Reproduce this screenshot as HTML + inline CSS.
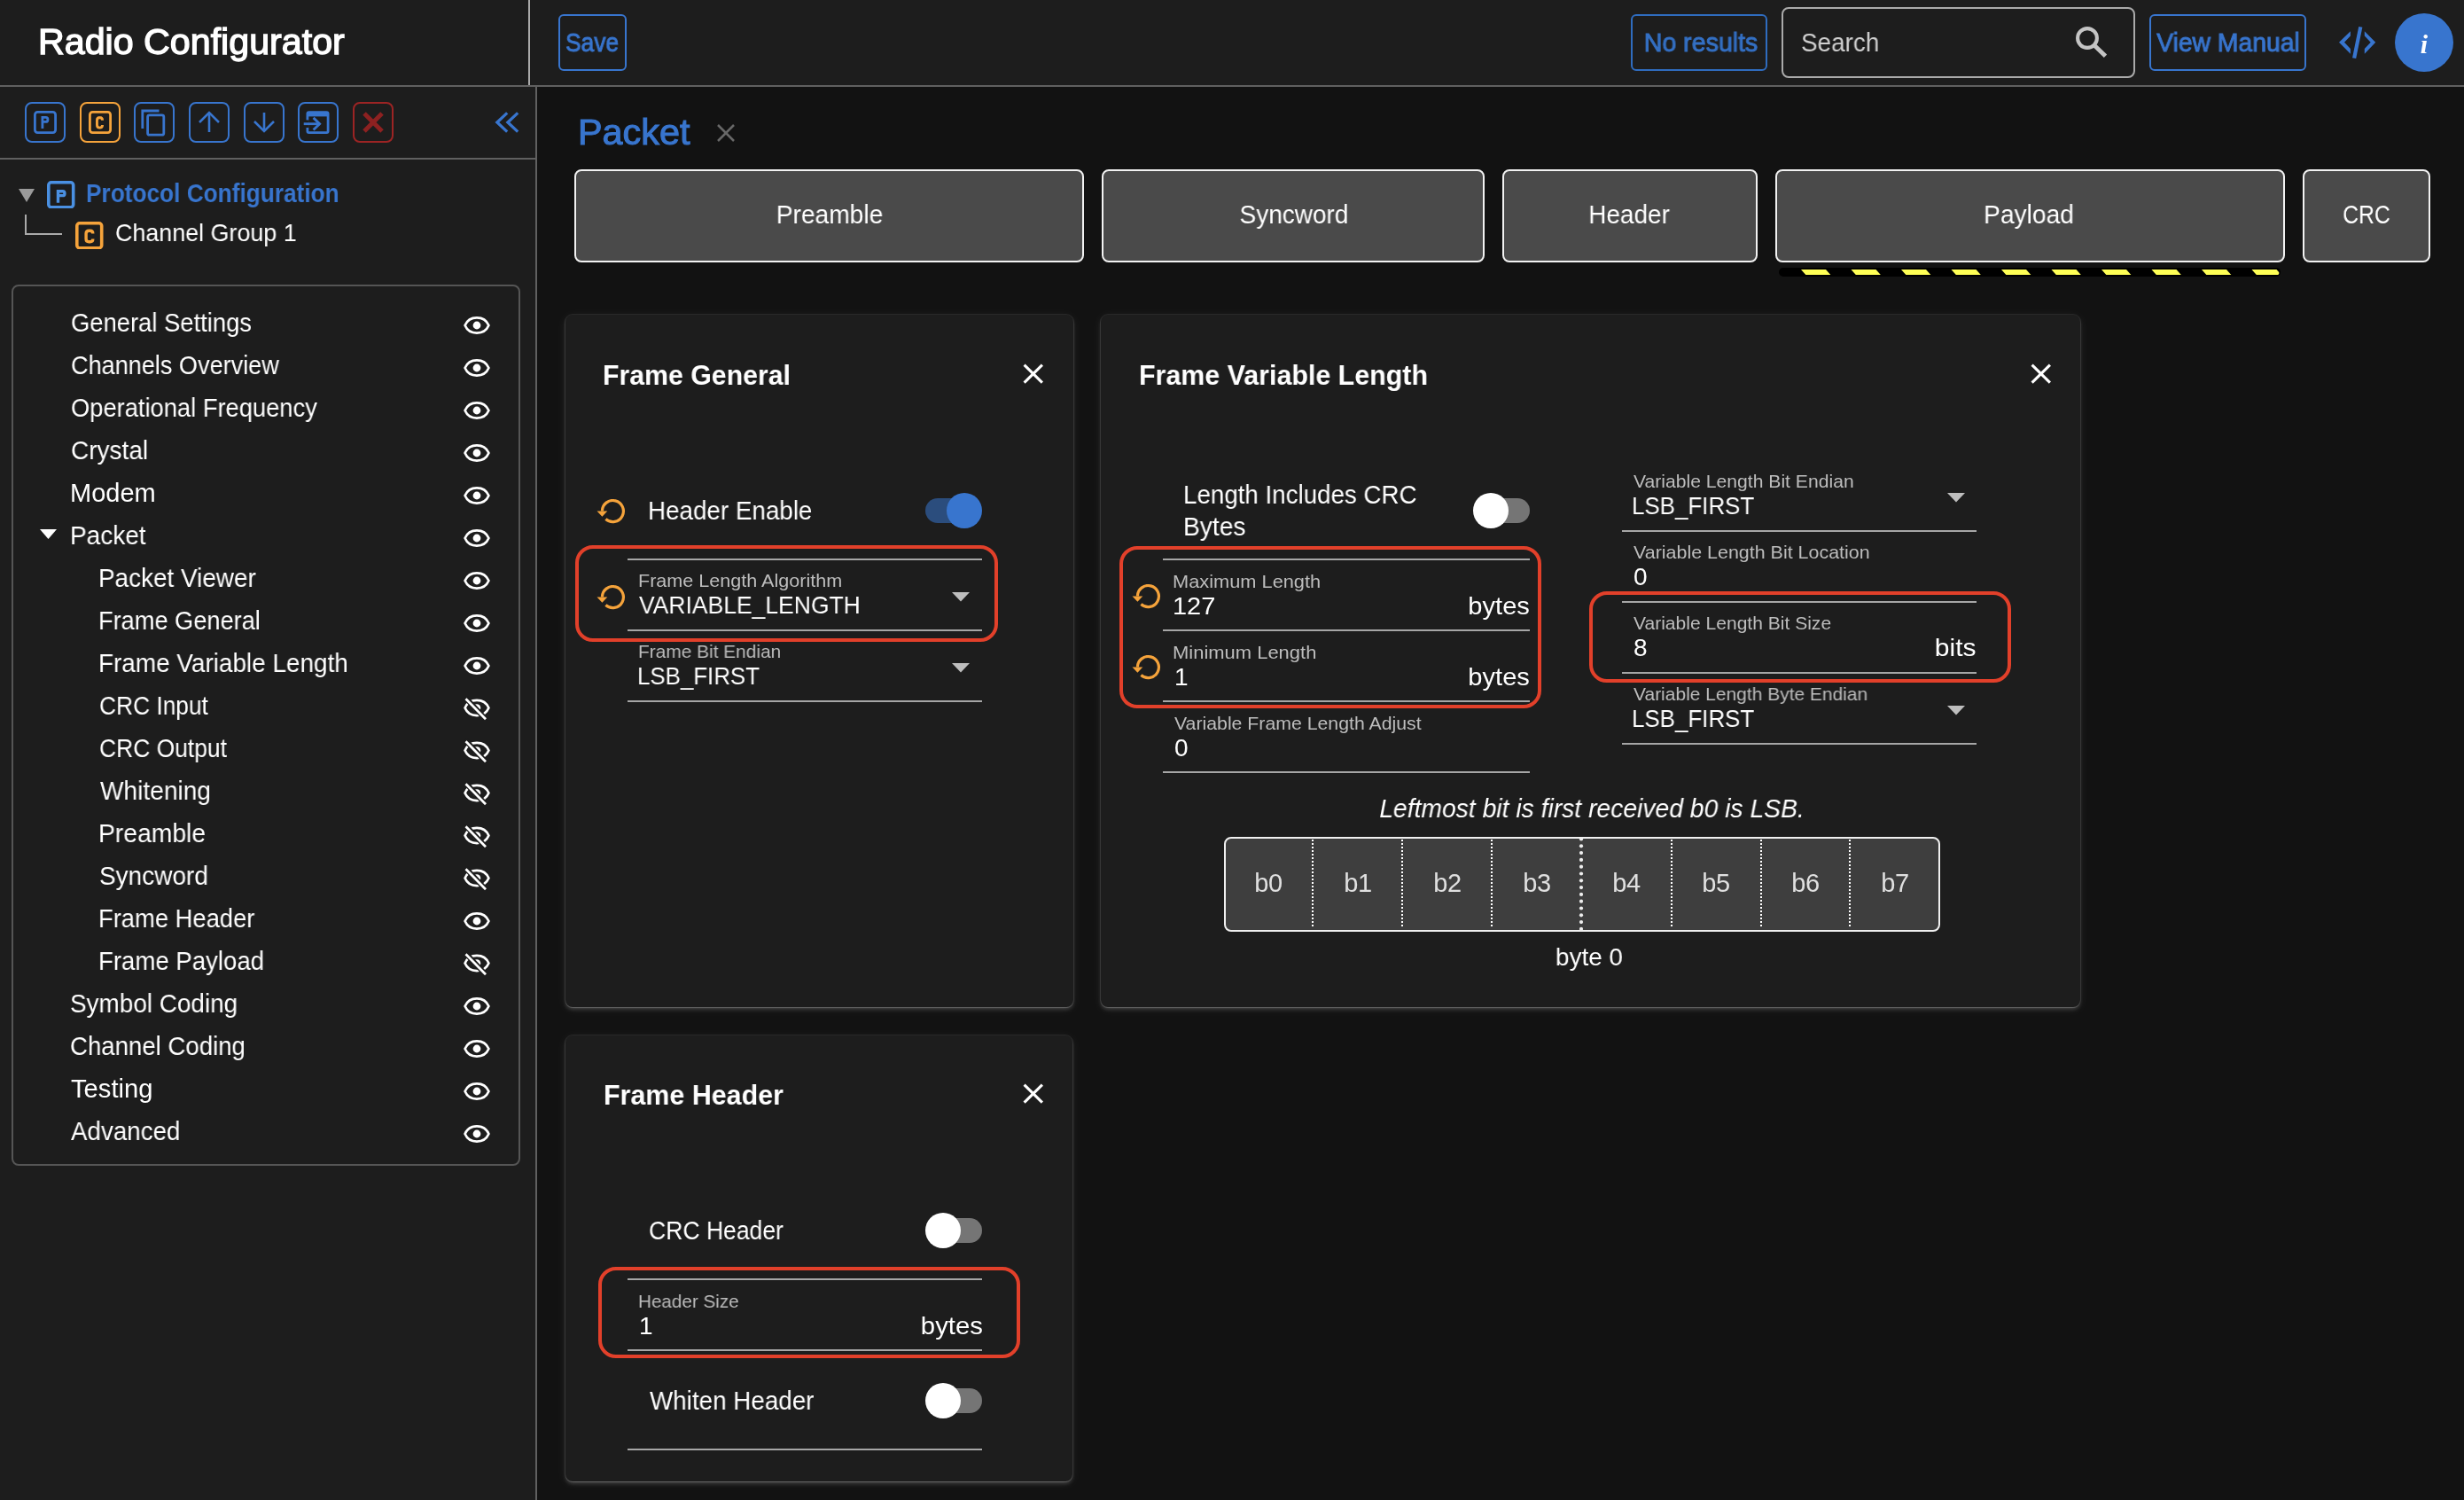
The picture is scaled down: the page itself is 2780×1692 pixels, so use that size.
<!DOCTYPE html>
<html><head><meta charset="utf-8"><style>
html,body{margin:0;padding:0;width:2780px;height:1692px;overflow:hidden;background:#121212;}
body{position:relative;font-family:"Liberation Sans",sans-serif;}
.t{position:absolute;white-space:nowrap;will-change:transform;}
.r{position:absolute;}
</style></head><body>
<div class="r" style="left:0px;top:0px;width:2780px;height:96px;background:#1d1d1d"></div>
<div class="r" style="left:0px;top:96px;width:2780px;height:2px;background:#606060"></div>
<div class="t" style="left:43.00px;top:27.1px;font-size:40px;line-height:40px;font-weight:400;color:#fff;letter-spacing:0px;font-style:normal;-webkit-text-stroke:1.3px #fff;transform:scaleX(1.0300);transform-origin:0 0">Radio Configurator</div>
<div class="r" style="left:596px;top:0px;width:2px;height:96px;background:#aaa"></div>
<div class="r" style="left:630px;top:16px;width:77px;height:64px;border:2px solid #3875ce;border-radius:6px;box-sizing:border-box"></div>
<div class="t" style="left:-332.50px;width:2000px;text-align:center;top:33.5px;font-size:29px;line-height:29px;font-weight:400;color:#3875ce;letter-spacing:0px;font-style:normal;-webkit-text-stroke:0.9px #3875ce;transform:scaleX(0.9087);transform-origin:50% 0">Save</div>
<div class="r" style="left:1840px;top:16px;width:154px;height:64px;border:2px solid #2f6cbf;border-radius:6px;box-sizing:border-box"></div>
<div class="t" style="left:919.00px;width:2000px;text-align:center;top:33.5px;font-size:29px;line-height:29px;font-weight:400;color:#3470c4;letter-spacing:0px;font-style:normal;-webkit-text-stroke:0.9px #3470c4;transform:scaleX(0.9844);transform-origin:50% 0">No results</div>
<div class="r" style="left:2010px;top:8px;width:399px;height:80px;border:2px solid #aaa;border-radius:8px;box-sizing:border-box;background:#1d1d1d"></div>
<div class="t" style="left:2031.50px;top:33.5px;font-size:29px;line-height:29px;font-weight:400;color:#cfcfcf;letter-spacing:0px;font-style:normal;;transform:scaleX(0.9611);transform-origin:0 0">Search</div>
<svg class="r" style="left:2338.4px;top:26px" width="46" height="46" viewBox="0 0 46 46"><circle cx="17" cy="17" r="10.9" fill="none" stroke="#c4c4c4" stroke-width="4.1"/><line x1="24.5" y1="24.8" x2="37.5" y2="37.2" stroke="#c4c4c4" stroke-width="4.8"/></svg>
<div class="r" style="left:2425px;top:16px;width:177px;height:64px;border:2px solid #3875ce;border-radius:6px;box-sizing:border-box"></div>
<div class="t" style="left:1513.50px;width:2000px;text-align:center;top:33.5px;font-size:29px;line-height:29px;font-weight:400;color:#3875ce;letter-spacing:0px;font-style:normal;-webkit-text-stroke:0.9px #3875ce;transform:scaleX(0.9758);transform-origin:50% 0">View Manual</div>
<svg class="r" style="left:2630px;top:25px" width="60" height="45" viewBox="0 0 60 45"><polygon points="21.9,10.2 9,22.8 21.9,35.7 21.9,30 15,22.8 21.9,15.6" fill="#3875ce"/><polygon points="37.8,10.2 50.2,22.8 37.8,35.7 37.8,30 44.7,22.8 37.8,15.6" fill="#3875ce"/><line x1="33.3" y1="5.3" x2="26.1" y2="40.6" stroke="#3875ce" stroke-width="4.2"/></svg>
<div class="r" style="left:2702px;top:15px;width:66px;height:66px;border-radius:50%;background:#3875ce"></div>
<div class="t" style="left:1735.00px;width:2000px;text-align:center;top:34.6px;font-size:30px;line-height:30px;font-weight:700;color:#fff;letter-spacing:0px;font-style:italic;font-family:'Liberation Serif',serif;transform-origin:50% 0">i</div>
<div class="r" style="left:0px;top:98px;width:604px;height:1594px;background:#1d1d1d"></div>
<div class="r" style="left:604px;top:98px;width:2px;height:1594px;background:#606060"></div>
<div class="r" style="left:0px;top:178px;width:604px;height:2px;background:#606060"></div>
<div class="r" style="left:28px;top:115px;width:46px;height:46px;border:2.2px solid #3875ce;border-radius:8px;box-sizing:border-box"></div>
<div class="r" style="left:89.7px;top:115px;width:45.999999999999986px;height:46px;border:2.2px solid #f5a33b;border-radius:8px;box-sizing:border-box"></div>
<div class="r" style="left:151.3px;top:115px;width:46.0px;height:46px;border:2.2px solid #3875ce;border-radius:8px;box-sizing:border-box"></div>
<div class="r" style="left:213px;top:115px;width:46px;height:46px;border:2.2px solid #3875ce;border-radius:8px;box-sizing:border-box"></div>
<div class="r" style="left:274.7px;top:115px;width:46.0px;height:46px;border:2.2px solid #3875ce;border-radius:8px;box-sizing:border-box"></div>
<div class="r" style="left:336.3px;top:115px;width:46.0px;height:46px;border:2.2px solid #3875ce;border-radius:8px;box-sizing:border-box"></div>
<div class="r" style="left:398px;top:115px;width:46px;height:46px;border:2.2px solid #9c2424;border-radius:8px;box-sizing:border-box"></div>
<svg class="r" style="left:38px;top:125px" width="26" height="26" viewBox="0 0 26 26"><rect x="1.4" y="1.4" width="23.2" height="23.2" rx="3" fill="none" stroke="#3875ce" stroke-width="2.8"/><path d="M9.9 20 V7.4 H13.7 Q15.9 7.4 15.9 9.600000000000001 V10.239999999999998 Q15.9 12.44 13.7 12.44 H9.9" fill="none" stroke="#3875ce" stroke-width="2.8"/></svg>
<svg class="r" style="left:99.7px;top:125px" width="26" height="26" viewBox="0 0 26 26"><rect x="1.4" y="1.4" width="23.2" height="23.2" rx="3" fill="none" stroke="#f5a33b" stroke-width="2.8"/><path d="M15.55 10.379999999999999 V10.65 Q15.55 7.45 12.350000000000001 7.45 H12.649999999999999 Q9.45 7.45 9.45 10.65 V15.950000000000003 Q9.45 19.150000000000002 12.649999999999999 19.150000000000002 H12.350000000000001 Q15.55 19.150000000000002 15.55 15.950000000000003 V16.220000000000002" fill="none" stroke="#f5a33b" stroke-width="2.9"/></svg>
<svg class="r" style="left:151.3px;top:115px" width="46" height="46" viewBox="0 0 46 46"><path d="M28.5 10 H9.8 V30" fill="none" stroke="#3875ce" stroke-width="2.8"/><rect x="15.6" y="14.8" width="18.2" height="22.4" rx="2" fill="none" stroke="#3875ce" stroke-width="2.8"/></svg>
<svg class="r" style="left:213px;top:115px" width="46" height="46" viewBox="0 0 46 46"><line x1="23" y1="12" x2="23" y2="34" stroke="#3875ce" stroke-width="2.6"/><polyline points="12,23 23,12 34,23" fill="none" stroke="#3875ce" stroke-width="2.6"/></svg>
<svg class="r" style="left:274.7px;top:115px" width="46" height="46" viewBox="0 0 46 46"><line x1="23" y1="12" x2="23" y2="33" stroke="#3875ce" stroke-width="2.6"/><polyline points="12,22 23,33 34,22" fill="none" stroke="#3875ce" stroke-width="2.6"/></svg>
<svg class="r" style="left:336.3px;top:115px" width="46" height="46" viewBox="0 0 46 46"><rect x="9.5" y="10.2" width="26" height="25.8" rx="3" fill="#3875ce"/><rect x="12.3" y="16.4" width="20.4" height="16.8" fill="#1d1d1d"/><rect x="9" y="20.4" width="3.6" height="8.6" fill="#1d1d1d"/><line x1="6.7" y1="24.7" x2="25" y2="24.7" stroke="#3875ce" stroke-width="2.8"/><polyline points="17.6,17.9 24.6,24.7 17.6,31.5" fill="none" stroke="#3875ce" stroke-width="2.9"/></svg>
<svg class="r" style="left:398px;top:115px" width="46" height="46" viewBox="0 0 46 46"><line x1="13" y1="13" x2="33" y2="33" stroke="#8d2121" stroke-width="5"/><line x1="33" y1="13" x2="13" y2="33" stroke="#8d2121" stroke-width="5"/></svg>
<svg class="r" style="left:555.6px;top:124px" width="36" height="28" viewBox="0 0 36 28"><polyline points="16.2,3.4 4.9,14 16.2,24.6" fill="none" stroke="#3875ce" stroke-width="3.3"/><polyline points="28.2,3.4 16.9,14 28.2,24.6" fill="none" stroke="#3875ce" stroke-width="3.3"/></svg>
<svg class="r" style="left:20px;top:212px" width="20" height="17" viewBox="0 0 20 17"><polygon points="1,1 19,1 10,16" fill="#9a9a9a"/></svg>
<svg class="r" style="left:53px;top:203.5px" width="31.5" height="31.5" viewBox="0 0 31.5 31.5"><rect x="1.8" y="1.8" width="27.9" height="27.9" rx="3" fill="none" stroke="#4a90e2" stroke-width="3.6"/><path d="M12.5 24.8 V11.7 H17.700000000000003 Q19.900000000000002 11.7 19.900000000000002 13.899999999999999 V14.388000000000005 Q19.900000000000002 16.588000000000005 17.700000000000003 16.588000000000005 H12.5" fill="none" stroke="#4a90e2" stroke-width="3.4"/></svg>
<div class="t" style="left:97.00px;top:203.5px;font-size:29px;line-height:29px;font-weight:700;color:#3875ce;letter-spacing:0px;font-style:normal;;transform:scaleX(0.9047);transform-origin:0 0">Protocol Configuration</div>
<div class="r" style="left:28px;top:242px;width:2px;height:23px;background:#aaa"></div>
<div class="r" style="left:28px;top:263px;width:42px;height:2px;background:#aaa"></div>
<svg class="r" style="left:85px;top:249.5px" width="31.5" height="31.5" viewBox="0 0 31.5 31.5"><rect x="1.8" y="1.8" width="27.9" height="27.9" rx="3" fill="none" stroke="#f5a33b" stroke-width="3.6"/><path d="M19.8 13.3 V13.399999999999999 Q19.8 10.2 16.6 10.2 H15.3 Q12.1 10.2 12.1 13.399999999999999 V19.6 Q12.1 22.8 15.3 22.8 H16.6 Q19.8 22.8 19.8 19.6 V19.7" fill="none" stroke="#f5a33b" stroke-width="3.4"/></svg>
<div class="t" style="left:130.00px;top:249.3px;font-size:28px;line-height:28px;font-weight:400;color:#fff;letter-spacing:0px;font-style:normal;;transform:scaleX(0.9598);transform-origin:0 0">Channel Group 1</div>
<div class="r" style="left:12.5px;top:320.5px;width:574.5px;height:994.5px;border:2px solid #555;border-radius:8px;box-sizing:border-box"></div>
<div class="t" style="left:80.00px;top:349.5px;font-size:29px;line-height:29px;font-weight:400;color:#fff;letter-spacing:0px;font-style:normal;;transform:scaleX(0.9443);transform-origin:0 0">General Settings</div>
<svg class="r" style="left:523px;top:355.5px" width="30" height="22" viewBox="0 0 30 22"><path d="M1.6 11 C6.5 -0.5 23.5 -0.5 28.4 11 C23.5 22.5 6.5 22.5 1.6 11 Z" fill="none" stroke="#fff" stroke-width="2.7"/><circle cx="15" cy="11" r="4.4" fill="#fff"/></svg>
<div class="t" style="left:80.00px;top:397.5px;font-size:29px;line-height:29px;font-weight:400;color:#fff;letter-spacing:0px;font-style:normal;;transform:scaleX(0.9338);transform-origin:0 0">Channels Overview</div>
<svg class="r" style="left:523px;top:403.5px" width="30" height="22" viewBox="0 0 30 22"><path d="M1.6 11 C6.5 -0.5 23.5 -0.5 28.4 11 C23.5 22.5 6.5 22.5 1.6 11 Z" fill="none" stroke="#fff" stroke-width="2.7"/><circle cx="15" cy="11" r="4.4" fill="#fff"/></svg>
<div class="t" style="left:80.00px;top:445.5px;font-size:29px;line-height:29px;font-weight:400;color:#fff;letter-spacing:0px;font-style:normal;;transform:scaleX(0.9419);transform-origin:0 0">Operational Frequency</div>
<svg class="r" style="left:523px;top:451.5px" width="30" height="22" viewBox="0 0 30 22"><path d="M1.6 11 C6.5 -0.5 23.5 -0.5 28.4 11 C23.5 22.5 6.5 22.5 1.6 11 Z" fill="none" stroke="#fff" stroke-width="2.7"/><circle cx="15" cy="11" r="4.4" fill="#fff"/></svg>
<div class="t" style="left:80.00px;top:493.5px;font-size:29px;line-height:29px;font-weight:400;color:#fff;letter-spacing:0px;font-style:normal;;transform:scaleX(0.9659);transform-origin:0 0">Crystal</div>
<svg class="r" style="left:523px;top:499.5px" width="30" height="22" viewBox="0 0 30 22"><path d="M1.6 11 C6.5 -0.5 23.5 -0.5 28.4 11 C23.5 22.5 6.5 22.5 1.6 11 Z" fill="none" stroke="#fff" stroke-width="2.7"/><circle cx="15" cy="11" r="4.4" fill="#fff"/></svg>
<div class="t" style="left:79.00px;top:541.5px;font-size:29px;line-height:29px;font-weight:400;color:#fff;letter-spacing:0px;font-style:normal;;transform:scaleX(1.0003);transform-origin:0 0">Modem</div>
<svg class="r" style="left:523px;top:547.5px" width="30" height="22" viewBox="0 0 30 22"><path d="M1.6 11 C6.5 -0.5 23.5 -0.5 28.4 11 C23.5 22.5 6.5 22.5 1.6 11 Z" fill="none" stroke="#fff" stroke-width="2.7"/><circle cx="15" cy="11" r="4.4" fill="#fff"/></svg>
<div class="t" style="left:79.00px;top:589.5px;font-size:29px;line-height:29px;font-weight:400;color:#fff;letter-spacing:0px;font-style:normal;;transform:scaleX(0.9659);transform-origin:0 0">Packet</div>
<svg class="r" style="left:523px;top:595.5px" width="30" height="22" viewBox="0 0 30 22"><path d="M1.6 11 C6.5 -0.5 23.5 -0.5 28.4 11 C23.5 22.5 6.5 22.5 1.6 11 Z" fill="none" stroke="#fff" stroke-width="2.7"/><circle cx="15" cy="11" r="4.4" fill="#fff"/></svg>
<div class="t" style="left:111.00px;top:637.5px;font-size:29px;line-height:29px;font-weight:400;color:#fff;letter-spacing:0px;font-style:normal;;transform:scaleX(0.9618);transform-origin:0 0">Packet Viewer</div>
<svg class="r" style="left:523px;top:643.5px" width="30" height="22" viewBox="0 0 30 22"><path d="M1.6 11 C6.5 -0.5 23.5 -0.5 28.4 11 C23.5 22.5 6.5 22.5 1.6 11 Z" fill="none" stroke="#fff" stroke-width="2.7"/><circle cx="15" cy="11" r="4.4" fill="#fff"/></svg>
<div class="t" style="left:111.00px;top:685.5px;font-size:29px;line-height:29px;font-weight:400;color:#fff;letter-spacing:0px;font-style:normal;;transform:scaleX(0.9376);transform-origin:0 0">Frame General</div>
<svg class="r" style="left:523px;top:691.5px" width="30" height="22" viewBox="0 0 30 22"><path d="M1.6 11 C6.5 -0.5 23.5 -0.5 28.4 11 C23.5 22.5 6.5 22.5 1.6 11 Z" fill="none" stroke="#fff" stroke-width="2.7"/><circle cx="15" cy="11" r="4.4" fill="#fff"/></svg>
<div class="t" style="left:111.00px;top:733.5px;font-size:29px;line-height:29px;font-weight:400;color:#fff;letter-spacing:0px;font-style:normal;;transform:scaleX(0.9621);transform-origin:0 0">Frame Variable Length</div>
<svg class="r" style="left:523px;top:739.5px" width="30" height="22" viewBox="0 0 30 22"><path d="M1.6 11 C6.5 -0.5 23.5 -0.5 28.4 11 C23.5 22.5 6.5 22.5 1.6 11 Z" fill="none" stroke="#fff" stroke-width="2.7"/><circle cx="15" cy="11" r="4.4" fill="#fff"/></svg>
<div class="t" style="left:112.00px;top:781.5px;font-size:29px;line-height:29px;font-weight:400;color:#fff;letter-spacing:0px;font-style:normal;;transform:scaleX(0.9075);transform-origin:0 0">CRC Input</div>
<svg class="r" style="left:523px;top:785.0px" width="30" height="28" viewBox="0 0 30 28"><path d="M1.6 13.5 C6.5 2 23.5 2 28.4 13.5 C23.5 25 6.5 25 1.6 13.5 Z" fill="none" stroke="#fff" stroke-width="2.7"/><circle cx="15" cy="13.5" r="4.3" fill="#fff"/><line x1="1.5" y1="1.5" x2="26.5" y2="27.8" stroke="#1d1d1d" stroke-width="6"/><line x1="2.5" y1="3.2" x2="25" y2="26.2" stroke="#fff" stroke-width="2.7"/></svg>
<div class="t" style="left:112.00px;top:829.5px;font-size:29px;line-height:29px;font-weight:400;color:#fff;letter-spacing:0px;font-style:normal;;transform:scaleX(0.9108);transform-origin:0 0">CRC Output</div>
<svg class="r" style="left:523px;top:833.0px" width="30" height="28" viewBox="0 0 30 28"><path d="M1.6 13.5 C6.5 2 23.5 2 28.4 13.5 C23.5 25 6.5 25 1.6 13.5 Z" fill="none" stroke="#fff" stroke-width="2.7"/><circle cx="15" cy="13.5" r="4.3" fill="#fff"/><line x1="1.5" y1="1.5" x2="26.5" y2="27.8" stroke="#1d1d1d" stroke-width="6"/><line x1="2.5" y1="3.2" x2="25" y2="26.2" stroke="#fff" stroke-width="2.7"/></svg>
<div class="t" style="left:113.00px;top:877.5px;font-size:29px;line-height:29px;font-weight:400;color:#fff;letter-spacing:0px;font-style:normal;;transform:scaleX(0.9689);transform-origin:0 0">Whitening</div>
<svg class="r" style="left:523px;top:881.0px" width="30" height="28" viewBox="0 0 30 28"><path d="M1.6 13.5 C6.5 2 23.5 2 28.4 13.5 C23.5 25 6.5 25 1.6 13.5 Z" fill="none" stroke="#fff" stroke-width="2.7"/><circle cx="15" cy="13.5" r="4.3" fill="#fff"/><line x1="1.5" y1="1.5" x2="26.5" y2="27.8" stroke="#1d1d1d" stroke-width="6"/><line x1="2.5" y1="3.2" x2="25" y2="26.2" stroke="#fff" stroke-width="2.7"/></svg>
<div class="t" style="left:111.00px;top:925.5px;font-size:29px;line-height:29px;font-weight:400;color:#fff;letter-spacing:0px;font-style:normal;;transform:scaleX(0.9756);transform-origin:0 0">Preamble</div>
<svg class="r" style="left:523px;top:929.0px" width="30" height="28" viewBox="0 0 30 28"><path d="M1.6 13.5 C6.5 2 23.5 2 28.4 13.5 C23.5 25 6.5 25 1.6 13.5 Z" fill="none" stroke="#fff" stroke-width="2.7"/><circle cx="15" cy="13.5" r="4.3" fill="#fff"/><line x1="1.5" y1="1.5" x2="26.5" y2="27.8" stroke="#1d1d1d" stroke-width="6"/><line x1="2.5" y1="3.2" x2="25" y2="26.2" stroke="#fff" stroke-width="2.7"/></svg>
<div class="t" style="left:112.00px;top:973.5px;font-size:29px;line-height:29px;font-weight:400;color:#fff;letter-spacing:0px;font-style:normal;;transform:scaleX(0.9646);transform-origin:0 0">Syncword</div>
<svg class="r" style="left:523px;top:977.0px" width="30" height="28" viewBox="0 0 30 28"><path d="M1.6 13.5 C6.5 2 23.5 2 28.4 13.5 C23.5 25 6.5 25 1.6 13.5 Z" fill="none" stroke="#fff" stroke-width="2.7"/><circle cx="15" cy="13.5" r="4.3" fill="#fff"/><line x1="1.5" y1="1.5" x2="26.5" y2="27.8" stroke="#1d1d1d" stroke-width="6"/><line x1="2.5" y1="3.2" x2="25" y2="26.2" stroke="#fff" stroke-width="2.7"/></svg>
<div class="t" style="left:111.00px;top:1021.5px;font-size:29px;line-height:29px;font-weight:400;color:#fff;letter-spacing:0px;font-style:normal;;transform:scaleX(0.9433);transform-origin:0 0">Frame Header</div>
<svg class="r" style="left:523px;top:1027.5px" width="30" height="22" viewBox="0 0 30 22"><path d="M1.6 11 C6.5 -0.5 23.5 -0.5 28.4 11 C23.5 22.5 6.5 22.5 1.6 11 Z" fill="none" stroke="#fff" stroke-width="2.7"/><circle cx="15" cy="11" r="4.4" fill="#fff"/></svg>
<div class="t" style="left:111.00px;top:1069.5px;font-size:29px;line-height:29px;font-weight:400;color:#fff;letter-spacing:0px;font-style:normal;;transform:scaleX(0.9511);transform-origin:0 0">Frame Payload</div>
<svg class="r" style="left:523px;top:1073.0px" width="30" height="28" viewBox="0 0 30 28"><path d="M1.6 13.5 C6.5 2 23.5 2 28.4 13.5 C23.5 25 6.5 25 1.6 13.5 Z" fill="none" stroke="#fff" stroke-width="2.7"/><circle cx="15" cy="13.5" r="4.3" fill="#fff"/><line x1="1.5" y1="1.5" x2="26.5" y2="27.8" stroke="#1d1d1d" stroke-width="6"/><line x1="2.5" y1="3.2" x2="25" y2="26.2" stroke="#fff" stroke-width="2.7"/></svg>
<div class="t" style="left:79.00px;top:1117.5px;font-size:29px;line-height:29px;font-weight:400;color:#fff;letter-spacing:0px;font-style:normal;;transform:scaleX(0.9616);transform-origin:0 0">Symbol Coding</div>
<svg class="r" style="left:523px;top:1123.5px" width="30" height="22" viewBox="0 0 30 22"><path d="M1.6 11 C6.5 -0.5 23.5 -0.5 28.4 11 C23.5 22.5 6.5 22.5 1.6 11 Z" fill="none" stroke="#fff" stroke-width="2.7"/><circle cx="15" cy="11" r="4.4" fill="#fff"/></svg>
<div class="t" style="left:79.00px;top:1165.5px;font-size:29px;line-height:29px;font-weight:400;color:#fff;letter-spacing:0px;font-style:normal;;transform:scaleX(0.9515);transform-origin:0 0">Channel Coding</div>
<svg class="r" style="left:523px;top:1171.5px" width="30" height="22" viewBox="0 0 30 22"><path d="M1.6 11 C6.5 -0.5 23.5 -0.5 28.4 11 C23.5 22.5 6.5 22.5 1.6 11 Z" fill="none" stroke="#fff" stroke-width="2.7"/><circle cx="15" cy="11" r="4.4" fill="#fff"/></svg>
<div class="t" style="left:80.00px;top:1213.5px;font-size:29px;line-height:29px;font-weight:400;color:#fff;letter-spacing:0px;font-style:normal;;transform:scaleX(1.0059);transform-origin:0 0">Testing</div>
<svg class="r" style="left:523px;top:1219.5px" width="30" height="22" viewBox="0 0 30 22"><path d="M1.6 11 C6.5 -0.5 23.5 -0.5 28.4 11 C23.5 22.5 6.5 22.5 1.6 11 Z" fill="none" stroke="#fff" stroke-width="2.7"/><circle cx="15" cy="11" r="4.4" fill="#fff"/></svg>
<div class="t" style="left:80.00px;top:1261.5px;font-size:29px;line-height:29px;font-weight:400;color:#fff;letter-spacing:0px;font-style:normal;;transform:scaleX(0.9571);transform-origin:0 0">Advanced</div>
<svg class="r" style="left:523px;top:1267.5px" width="30" height="22" viewBox="0 0 30 22"><path d="M1.6 11 C6.5 -0.5 23.5 -0.5 28.4 11 C23.5 22.5 6.5 22.5 1.6 11 Z" fill="none" stroke="#fff" stroke-width="2.7"/><circle cx="15" cy="11" r="4.4" fill="#fff"/></svg>
<svg class="r" style="left:45px;top:597px" width="20" height="12" viewBox="0 0 20 12"><polygon points="0,0 19,0 9.5,11" fill="#fff"/></svg>
<div class="t" style="left:652.00px;top:129.3px;font-size:41px;line-height:41px;font-weight:400;color:#3875ce;letter-spacing:0px;font-style:normal;-webkit-text-stroke:1.1px #3875ce;transform:scaleX(1.0083);transform-origin:0 0">Packet</div>
<svg class="r" style="left:807px;top:138px" width="24" height="24" viewBox="0 0 24 24"><line x1="3" y1="3" x2="21" y2="21" stroke="#686868" stroke-width="2.5"/><line x1="21" y1="3" x2="3" y2="21" stroke="#686868" stroke-width="2.5"/></svg>
<div class="r" style="left:648px;top:190.5px;width:574.5px;height:105.5px;background:#4a4a4a;border:2px solid #f2f2f2;border-radius:8px;box-sizing:border-box"></div>
<div class="t" style="left:-64.50px;width:2000px;text-align:center;top:227.5px;font-size:29px;line-height:29px;font-weight:400;color:#fff;letter-spacing:0px;font-style:normal;;transform:scaleX(0.9717);transform-origin:50% 0">Preamble</div>
<div class="r" style="left:1243px;top:190.5px;width:432px;height:105.5px;background:#4a4a4a;border:2px solid #f2f2f2;border-radius:8px;box-sizing:border-box"></div>
<div class="t" style="left:459.75px;width:2000px;text-align:center;top:227.5px;font-size:29px;line-height:29px;font-weight:400;color:#fff;letter-spacing:0px;font-style:normal;;transform:scaleX(0.9642);transform-origin:50% 0">Syncword</div>
<div class="r" style="left:1695px;top:190.5px;width:287.5px;height:105.5px;background:#4a4a4a;border:2px solid #f2f2f2;border-radius:8px;box-sizing:border-box"></div>
<div class="t" style="left:838.00px;width:2000px;text-align:center;top:227.5px;font-size:29px;line-height:29px;font-weight:400;color:#fff;letter-spacing:0px;font-style:normal;;transform:scaleX(0.9635);transform-origin:50% 0">Header</div>
<div class="r" style="left:2003px;top:190.5px;width:574.5px;height:105.5px;background:#4a4a4a;border:2px solid #f2f2f2;border-radius:8px;box-sizing:border-box"></div>
<div class="t" style="left:1289.25px;width:2000px;text-align:center;top:227.5px;font-size:29px;line-height:29px;font-weight:400;color:#fff;letter-spacing:0px;font-style:normal;;transform:scaleX(0.9705);transform-origin:50% 0">Payload</div>
<div class="r" style="left:2598px;top:190.5px;width:144px;height:105.5px;background:#4a4a4a;border:2px solid #f2f2f2;border-radius:8px;box-sizing:border-box"></div>
<div class="t" style="left:1669.50px;width:2000px;text-align:center;top:227.5px;font-size:29px;line-height:29px;font-weight:400;color:#fff;letter-spacing:0px;font-style:normal;;transform:scaleX(0.8510);transform-origin:50% 0">CRC</div>
<svg class="r" style="left:2007px;top:302px" width="566" height="10" viewBox="0 0 566 10"><defs><clipPath id="hz"><rect x="1.5" y="1.5" width="563" height="7" rx="3.5"/></clipPath></defs><rect x="0" y="0" width="566" height="10" rx="5" fill="#000"/><g clip-path="url(#hz)"><polygon points="25.00,2 53.00,2 58.30,8 30.30,8" fill="#ffff55"/><polygon points="81.50,2 109.50,2 114.80,8 86.80,8" fill="#ffff55"/><polygon points="138.00,2 166.00,2 171.30,8 143.30,8" fill="#ffff55"/><polygon points="194.50,2 222.50,2 227.80,8 199.80,8" fill="#ffff55"/><polygon points="251.00,2 279.00,2 284.30,8 256.30,8" fill="#ffff55"/><polygon points="307.50,2 335.50,2 340.80,8 312.80,8" fill="#ffff55"/><polygon points="364.00,2 392.00,2 397.30,8 369.30,8" fill="#ffff55"/><polygon points="420.50,2 448.50,2 453.80,8 425.80,8" fill="#ffff55"/><polygon points="477.00,2 505.00,2 510.30,8 482.30,8" fill="#ffff55"/><polygon points="533.50,2 561.50,2 566.80,8 538.80,8" fill="#ffff55"/></g></svg>
<div class="r" style="left:637.5px;top:354.5px;width:573.0px;height:781.0px;background:#1d1d1d;border-radius:8px;box-shadow:0 0 0 1px rgba(255,255,255,0.08),0 2px 12px 2px rgba(255,255,255,0.05),0 3px 5px -1px rgba(255,255,255,0.22),0 1px 1px 0 rgba(255,255,255,0.12)"></div>
<div class="r" style="left:1241.5px;top:355px;width:1105.5px;height:781px;background:#1d1d1d;border-radius:8px;box-shadow:0 0 0 1px rgba(255,255,255,0.08),0 2px 12px 2px rgba(255,255,255,0.05),0 3px 5px -1px rgba(255,255,255,0.22),0 1px 1px 0 rgba(255,255,255,0.12)"></div>
<div class="r" style="left:638px;top:1167.5px;width:572px;height:503.0px;background:#1d1d1d;border-radius:8px;box-shadow:0 0 0 1px rgba(255,255,255,0.08),0 2px 12px 2px rgba(255,255,255,0.05),0 3px 5px -1px rgba(255,255,255,0.22),0 1px 1px 0 rgba(255,255,255,0.12)"></div>
<div class="t" style="left:680.00px;top:407.4px;font-size:32px;line-height:32px;font-weight:700;color:#fff;letter-spacing:0px;font-style:normal;;transform:scaleX(0.9455);transform-origin:0 0">Frame General</div>
<svg class="r" style="left:1154px;top:410.0px" width="24" height="24" viewBox="0 0 24 24"><line x1="1.6" y1="1.6" x2="21.9" y2="21.6" stroke="#fff" stroke-width="3.1"/><line x1="21.9" y1="1.6" x2="1.6" y2="21.6" stroke="#fff" stroke-width="3.1"/></svg>
<svg class="r" style="left:672.5px;top:563.0px" width="36" height="32" viewBox="0 0 36 32"><path d="M10.4 22.5 A12 12 0 1 0 6.4 13.6" fill="none" stroke="#f5a33b" stroke-width="3.2"/><polygon points="0.5,13.4 12.3,13.4 6.4,19.8" fill="#f5a33b"/></svg>
<div class="t" style="left:730.50px;top:561.5px;font-size:29px;line-height:29px;font-weight:400;color:#fff;letter-spacing:0px;font-style:normal;;transform:scaleX(0.9582);transform-origin:0 0">Header Enable</div>
<div class="r" style="left:1044px;top:562px;width:60px;height:28px;background:#2b4d7d;border-radius:14px"></div>
<div class="r" style="left:1068px;top:556px;width:40px;height:40px;border-radius:50%;background:#3875ce"></div>
<div class="r" style="left:649px;top:614.5px;width:477px;height:109.5px;border:4px solid #e2402a;border-radius:20px;box-sizing:border-box"></div>
<div class="r" style="left:708px;top:630px;width:400px;height:2px;background:#a6a6a6"></div>
<div class="r" style="left:708px;top:710px;width:400px;height:2px;background:#a6a6a6"></div>
<div class="r" style="left:708px;top:790px;width:400px;height:2px;background:#a6a6a6"></div>
<svg class="r" style="left:672.5px;top:660.0px" width="36" height="32" viewBox="0 0 36 32"><path d="M10.4 22.5 A12 12 0 1 0 6.4 13.6" fill="none" stroke="#f5a33b" stroke-width="3.2"/><polygon points="0.5,13.4 12.3,13.4 6.4,19.8" fill="#f5a33b"/></svg>
<div class="t" style="left:719.50px;top:644.2px;font-size:21px;line-height:21px;font-weight:400;color:#bdbdbd;letter-spacing:0px;font-style:normal;;transform:scaleX(1.0272);transform-origin:0 0">Frame Length Algorithm</div>
<div class="t" style="left:720.50px;top:669.3px;font-size:28px;line-height:28px;font-weight:400;color:#fff;letter-spacing:0px;font-style:normal;;transform:scaleX(0.9459);transform-origin:0 0">VARIABLE_LENGTH</div>
<svg class="r" style="left:1074px;top:668px" width="20" height="11" viewBox="0 0 20 11"><polygon points="0,0 20,0 10,10.5" fill="#bebebe"/></svg>
<div class="t" style="left:719.50px;top:724.2px;font-size:21px;line-height:21px;font-weight:400;color:#bdbdbd;letter-spacing:0px;font-style:normal;;transform:scaleX(0.9938);transform-origin:0 0">Frame Bit Endian</div>
<div class="t" style="left:718.50px;top:749.3px;font-size:28px;line-height:28px;font-weight:400;color:#fff;letter-spacing:0px;font-style:normal;;transform:scaleX(0.9239);transform-origin:0 0">LSB_FIRST</div>
<svg class="r" style="left:1074px;top:748px" width="20" height="11" viewBox="0 0 20 11"><polygon points="0,0 20,0 10,10.5" fill="#bebebe"/></svg>
<div class="t" style="left:1285.00px;top:407.4px;font-size:32px;line-height:32px;font-weight:700;color:#fff;letter-spacing:0px;font-style:normal;;transform:scaleX(0.9496);transform-origin:0 0">Frame Variable Length</div>
<svg class="r" style="left:2290.5px;top:409.5px" width="24" height="24" viewBox="0 0 24 24"><line x1="1.6" y1="1.6" x2="21.9" y2="21.6" stroke="#fff" stroke-width="3.1"/><line x1="21.9" y1="1.6" x2="1.6" y2="21.6" stroke="#fff" stroke-width="3.1"/></svg>
<div class="t" style="left:1335.00px;top:543.5px;font-size:29px;line-height:29px;font-weight:400;color:#fff;letter-spacing:0px;font-style:normal;;transform:scaleX(0.9560);transform-origin:0 0">Length Includes CRC</div>
<div class="t" style="left:1335.00px;top:579.5px;font-size:29px;line-height:29px;font-weight:400;color:#fff;letter-spacing:0px;font-style:normal;;transform:scaleX(0.9721);transform-origin:0 0">Bytes</div>
<div class="r" style="left:1666px;top:561.8px;width:60px;height:28.0px;background:#757575;border-radius:14px"></div>
<div class="r" style="left:1662px;top:556px;width:40px;height:40px;border-radius:50%;background:#fff"></div>
<div class="r" style="left:1263px;top:615.5px;width:476px;height:183.5px;border:4px solid #e2402a;border-radius:20px;box-sizing:border-box"></div>
<div class="r" style="left:1312px;top:630px;width:414px;height:2px;background:#a6a6a6"></div>
<div class="r" style="left:1312px;top:710px;width:414px;height:2px;background:#a6a6a6"></div>
<div class="r" style="left:1312px;top:790px;width:414px;height:2px;background:#a6a6a6"></div>
<div class="r" style="left:1312px;top:870px;width:414px;height:2px;background:#a6a6a6"></div>
<svg class="r" style="left:1276.5px;top:659.0px" width="36" height="32" viewBox="0 0 36 32"><path d="M10.4 22.5 A12 12 0 1 0 6.4 13.6" fill="none" stroke="#f5a33b" stroke-width="3.2"/><polygon points="0.5,13.4 12.3,13.4 6.4,19.8" fill="#f5a33b"/></svg>
<svg class="r" style="left:1276.5px;top:739.0px" width="36" height="32" viewBox="0 0 36 32"><path d="M10.4 22.5 A12 12 0 1 0 6.4 13.6" fill="none" stroke="#f5a33b" stroke-width="3.2"/><polygon points="0.5,13.4 12.3,13.4 6.4,19.8" fill="#f5a33b"/></svg>
<div class="t" style="left:1323.00px;top:644.7px;font-size:21px;line-height:21px;font-weight:400;color:#bdbdbd;letter-spacing:0px;font-style:normal;;transform:scaleX(1.0379);transform-origin:0 0">Maximum Length</div>
<div class="t" style="left:1323.00px;top:669.8px;font-size:28px;line-height:28px;font-weight:400;color:#fff;letter-spacing:0px;font-style:normal;;transform:scaleX(1.0353);transform-origin:0 0">127</div>
<div class="t" style="right:1054.00px;top:669.8px;font-size:28px;line-height:28px;font-weight:400;color:#fff;letter-spacing:0px;font-style:normal;;transform:scaleX(1.0393);transform-origin:100% 0">bytes</div>
<div class="t" style="left:1323.00px;top:724.7px;font-size:21px;line-height:21px;font-weight:400;color:#bdbdbd;letter-spacing:0px;font-style:normal;;transform:scaleX(1.0459);transform-origin:0 0">Minimum Length</div>
<div class="t" style="left:1324.50px;top:749.8px;font-size:28px;line-height:28px;font-weight:400;color:#fff;letter-spacing:-0.4px;font-style:normal;;transform-origin:0 0">1</div>
<div class="t" style="right:1054.00px;top:749.8px;font-size:28px;line-height:28px;font-weight:400;color:#fff;letter-spacing:0px;font-style:normal;;transform:scaleX(1.0393);transform-origin:100% 0">bytes</div>
<div class="t" style="left:1325.00px;top:804.7px;font-size:21px;line-height:21px;font-weight:400;color:#bdbdbd;letter-spacing:0px;font-style:normal;;transform:scaleX(1.0127);transform-origin:0 0">Variable Frame Length Adjust</div>
<div class="t" style="left:1324.50px;top:829.8px;font-size:28px;line-height:28px;font-weight:400;color:#fff;letter-spacing:-0.4px;font-style:normal;;transform-origin:0 0">0</div>
<div class="r" style="left:1830px;top:597.5px;width:400px;height:2.0px;background:#a6a6a6"></div>
<div class="r" style="left:1830px;top:677.5px;width:400px;height:2.0px;background:#a6a6a6"></div>
<div class="r" style="left:1830px;top:757.5px;width:400px;height:2.0px;background:#a6a6a6"></div>
<div class="r" style="left:1830px;top:837.5px;width:400px;height:2.0px;background:#a6a6a6"></div>
<div class="t" style="left:1843.00px;top:532.2px;font-size:21px;line-height:21px;font-weight:400;color:#bdbdbd;letter-spacing:0px;font-style:normal;;transform:scaleX(1.0061);transform-origin:0 0">Variable Length Bit Endian</div>
<div class="t" style="left:1841.00px;top:557.3px;font-size:28px;line-height:28px;font-weight:400;color:#fff;letter-spacing:0px;font-style:normal;;transform:scaleX(0.9252);transform-origin:0 0">LSB_FIRST</div>
<svg class="r" style="left:2196.5px;top:555.5px" width="20" height="11" viewBox="0 0 20 11"><polygon points="0,0 20,0 10,10.5" fill="#bebebe"/></svg>
<div class="t" style="left:1843.00px;top:612.2px;font-size:21px;line-height:21px;font-weight:400;color:#bdbdbd;letter-spacing:0px;font-style:normal;;transform:scaleX(1.0212);transform-origin:0 0">Variable Length Bit Location</div>
<div class="t" style="left:1843.00px;top:637.3px;font-size:28px;line-height:28px;font-weight:400;color:#fff;letter-spacing:-0.4px;font-style:normal;;transform-origin:0 0">0</div>
<div class="r" style="left:1793px;top:667px;width:476px;height:103px;border:4px solid #e2402a;border-radius:20px;box-sizing:border-box"></div>
<div class="t" style="left:1843.00px;top:692.2px;font-size:21px;line-height:21px;font-weight:400;color:#bdbdbd;letter-spacing:0px;font-style:normal;;transform:scaleX(1.0023);transform-origin:0 0">Variable Length Bit Size</div>
<div class="t" style="left:1843.00px;top:717.3px;font-size:28px;line-height:28px;font-weight:400;color:#fff;letter-spacing:-0.4px;font-style:normal;;transform-origin:0 0">8</div>
<div class="t" style="right:550.00px;top:717.3px;font-size:28px;line-height:28px;font-weight:400;color:#fff;letter-spacing:0px;font-style:normal;;transform:scaleX(1.0737);transform-origin:100% 0">bits</div>
<div class="t" style="left:1843.00px;top:772.2px;font-size:21px;line-height:21px;font-weight:400;color:#bdbdbd;letter-spacing:0px;font-style:normal;;transform:scaleX(0.9981);transform-origin:0 0">Variable Length Byte Endian</div>
<div class="t" style="left:1841.00px;top:797.3px;font-size:28px;line-height:28px;font-weight:400;color:#fff;letter-spacing:0px;font-style:normal;;transform:scaleX(0.9252);transform-origin:0 0">LSB_FIRST</div>
<svg class="r" style="left:2196.5px;top:795.5px" width="20" height="11" viewBox="0 0 20 11"><polygon points="0,0 20,0 10,10.5" fill="#bebebe"/></svg>
<div class="t" style="left:796.00px;width:2000px;text-align:center;top:898.0px;font-size:29px;line-height:29px;font-weight:400;color:#fff;letter-spacing:0px;font-style:italic;;transform:scaleX(0.9754);transform-origin:50% 0">Leftmost bit is first received b0 is LSB.</div>
<div class="r" style="left:1381px;top:944px;width:808px;height:106.5px;background:#3e3e3e;border:2.5px solid #f0f0f0;border-radius:8px;box-sizing:border-box"></div>
<svg class="r" style="left:1480px;top:947px" width="2" height="100" viewBox="0 0 2 100"><line x1="1" y1="0" x2="1" y2="100" stroke="#fff" stroke-width="2" stroke-dasharray="2,2"/></svg>
<svg class="r" style="left:1581px;top:947px" width="2" height="100" viewBox="0 0 2 100"><line x1="1" y1="0" x2="1" y2="100" stroke="#fff" stroke-width="2" stroke-dasharray="2,2"/></svg>
<svg class="r" style="left:1682px;top:947px" width="2" height="100" viewBox="0 0 2 100"><line x1="1" y1="0" x2="1" y2="100" stroke="#fff" stroke-width="2" stroke-dasharray="2,2"/></svg>
<svg class="r" style="left:1781px;top:943.5px" width="6" height="108" viewBox="0 0 6 108"><circle cx="3" cy="2.50" r="2.1" fill="#eee"/><circle cx="3" cy="10.30" r="2.1" fill="#eee"/><circle cx="3" cy="18.10" r="2.1" fill="#eee"/><circle cx="3" cy="25.90" r="2.1" fill="#eee"/><circle cx="3" cy="33.70" r="2.1" fill="#eee"/><circle cx="3" cy="41.50" r="2.1" fill="#eee"/><circle cx="3" cy="49.30" r="2.1" fill="#eee"/><circle cx="3" cy="57.10" r="2.1" fill="#eee"/><circle cx="3" cy="64.90" r="2.1" fill="#eee"/><circle cx="3" cy="72.70" r="2.1" fill="#eee"/><circle cx="3" cy="80.50" r="2.1" fill="#eee"/><circle cx="3" cy="88.30" r="2.1" fill="#eee"/><circle cx="3" cy="96.10" r="2.1" fill="#eee"/><circle cx="3" cy="103.90" r="2.1" fill="#eee"/></svg>
<svg class="r" style="left:1884.5px;top:947px" width="2" height="100" viewBox="0 0 2 100"><line x1="1" y1="0" x2="1" y2="100" stroke="#fff" stroke-width="2" stroke-dasharray="2,2"/></svg>
<svg class="r" style="left:1986px;top:947px" width="2" height="100" viewBox="0 0 2 100"><line x1="1" y1="0" x2="1" y2="100" stroke="#fff" stroke-width="2" stroke-dasharray="2,2"/></svg>
<svg class="r" style="left:2086px;top:947px" width="2" height="100" viewBox="0 0 2 100"><line x1="1" y1="0" x2="1" y2="100" stroke="#fff" stroke-width="2" stroke-dasharray="2,2"/></svg>
<div class="t" style="left:431.00px;width:2000px;text-align:center;top:981.5px;font-size:29px;line-height:29px;font-weight:400;color:#e0e0e0;letter-spacing:-0.3px;font-style:normal;;transform-origin:50% 0">b0</div>
<div class="t" style="left:531.50px;width:2000px;text-align:center;top:981.5px;font-size:29px;line-height:29px;font-weight:400;color:#e0e0e0;letter-spacing:-0.3px;font-style:normal;;transform-origin:50% 0">b1</div>
<div class="t" style="left:632.50px;width:2000px;text-align:center;top:981.5px;font-size:29px;line-height:29px;font-weight:400;color:#e0e0e0;letter-spacing:-0.3px;font-style:normal;;transform-origin:50% 0">b2</div>
<div class="t" style="left:733.50px;width:2000px;text-align:center;top:981.5px;font-size:29px;line-height:29px;font-weight:400;color:#e0e0e0;letter-spacing:-0.3px;font-style:normal;;transform-origin:50% 0">b3</div>
<div class="t" style="left:834.75px;width:2000px;text-align:center;top:981.5px;font-size:29px;line-height:29px;font-weight:400;color:#e0e0e0;letter-spacing:-0.3px;font-style:normal;;transform-origin:50% 0">b4</div>
<div class="t" style="left:936.25px;width:2000px;text-align:center;top:981.5px;font-size:29px;line-height:29px;font-weight:400;color:#e0e0e0;letter-spacing:-0.3px;font-style:normal;;transform-origin:50% 0">b5</div>
<div class="t" style="left:1037.00px;width:2000px;text-align:center;top:981.5px;font-size:29px;line-height:29px;font-weight:400;color:#e0e0e0;letter-spacing:-0.3px;font-style:normal;;transform-origin:50% 0">b6</div>
<div class="t" style="left:1138.00px;width:2000px;text-align:center;top:981.5px;font-size:29px;line-height:29px;font-weight:400;color:#e0e0e0;letter-spacing:-0.3px;font-style:normal;;transform-origin:50% 0">b7</div>
<div class="t" style="left:793.25px;width:2000px;text-align:center;top:1066.3px;font-size:28px;line-height:28px;font-weight:400;color:#fff;letter-spacing:0px;font-style:normal;;transform:scaleX(0.9942);transform-origin:50% 0">byte 0</div>
<div class="t" style="left:681.00px;top:1218.9px;font-size:32px;line-height:32px;font-weight:700;color:#fff;letter-spacing:0px;font-style:normal;;transform:scaleX(0.9505);transform-origin:0 0">Frame Header</div>
<svg class="r" style="left:1154px;top:1222.0px" width="24" height="24" viewBox="0 0 24 24"><line x1="1.6" y1="1.6" x2="21.9" y2="21.6" stroke="#fff" stroke-width="3.1"/><line x1="21.9" y1="1.6" x2="1.6" y2="21.6" stroke="#fff" stroke-width="3.1"/></svg>
<div class="t" style="left:732.00px;top:1373.5px;font-size:29px;line-height:29px;font-weight:400;color:#fff;letter-spacing:0px;font-style:normal;;transform:scaleX(0.9152);transform-origin:0 0">CRC Header</div>
<div class="r" style="left:1048px;top:1373.8px;width:60px;height:28.0px;background:#757575;border-radius:14px"></div>
<div class="r" style="left:1044px;top:1368px;width:40px;height:40px;border-radius:50%;background:#fff"></div>
<div class="r" style="left:675px;top:1429px;width:476px;height:103px;border:4px solid #e2402a;border-radius:20px;box-sizing:border-box"></div>
<div class="r" style="left:708px;top:1442px;width:400px;height:2px;background:#a6a6a6"></div>
<div class="r" style="left:708px;top:1522px;width:400px;height:2px;background:#a6a6a6"></div>
<div class="r" style="left:708px;top:1634px;width:400px;height:2px;background:#a6a6a6"></div>
<div class="t" style="left:720.00px;top:1457.2px;font-size:21px;line-height:21px;font-weight:400;color:#bdbdbd;letter-spacing:0px;font-style:normal;;transform:scaleX(0.9826);transform-origin:0 0">Header Size</div>
<div class="t" style="left:721.00px;top:1481.8px;font-size:28px;line-height:28px;font-weight:400;color:#fff;letter-spacing:-0.4px;font-style:normal;;transform-origin:0 0">1</div>
<div class="t" style="right:1671.00px;top:1481.8px;font-size:28px;line-height:28px;font-weight:400;color:#fff;letter-spacing:0px;font-style:normal;;transform:scaleX(1.0468);transform-origin:100% 0">bytes</div>
<div class="t" style="left:733.00px;top:1565.5px;font-size:29px;line-height:29px;font-weight:400;color:#fff;letter-spacing:0px;font-style:normal;;transform:scaleX(0.9586);transform-origin:0 0">Whiten Header</div>
<div class="r" style="left:1048px;top:1565.8px;width:60px;height:28.0px;background:#757575;border-radius:14px"></div>
<div class="r" style="left:1044px;top:1560px;width:40px;height:40px;border-radius:50%;background:#fff"></div>
</body></html>
